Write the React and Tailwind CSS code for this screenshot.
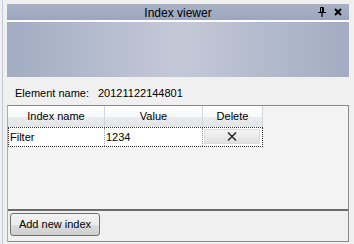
const HeaderCell = ({ children, className }) => (
  <div
    className={`flex items-center justify-center h-[21px] border-r border-[#d5d5d5] bg-[linear-gradient(to_bottom,#ffffff_0%,#f7f8fa_50%,#eaebed_51%,#e3e4e6_100%)] ${className}`}
  >
    {children}
  </div>
);

const App = () => {
  return (
    <div
      className="relative w-[354px] h-[244px] bg-[#f0f0f0] text-black overflow-hidden"
      style={{ fontFamily: '"Liberation Sans", Arial, sans-serif' }}
    >
      <div className="absolute left-[2px] top-0 w-[1px] h-full bg-[#c3c9d6]" />
      <div className="flex flex-col pl-[7px] pr-[5px] pt-[4px]">
        {/* title bar */}
        <div className="relative flex items-center justify-center h-[16px] bg-[linear-gradient(to_bottom,#a9b2c6,#9ba5bc)] text-[12px] leading-none">
          <span className="mt-[1px]">Index viewer</span>
          <div className="absolute right-[7px] top-[3px] flex items-center gap-[8px]">
            <svg width="8" height="10" viewBox="0 0 8 10">
              <path d="M2.5 0.5h3v5h-3z" stroke="#000" strokeWidth="1" fill="none" />
              <path d="M4.5 1v4.5 M0 5.5h8 M4 6v4" stroke="#000" strokeWidth="1.2" />
            </svg>
            <svg width="8" height="8" viewBox="0 0 8 8">
              <path d="M1 1L7 7M7 1L1 7" stroke="#000" strokeWidth="2" />
            </svg>
          </div>
        </div>
        <div className="h-[2px] bg-white" />
        {/* banner */}
        <div className="h-[55px] bg-[linear-gradient(to_right,#a2acc2_0%,#c4c9d8_50%,#a2acc2_100%)]" />

        {/* element name */}
        <div className="flex items-center h-[28px] pt-[4px] pl-[8px] text-[11px]">
          <span className="w-[83px]">Element name:</span>
          <span>20121122144801</span>
        </div>

        {/* grid panel */}
        <div className="flex flex-col h-[137px] border border-[#8a8a8a] border-l-[#adadad]">
          <div className="flex flex-col h-[105px] bg-[#f3f3f3] border-b-2 border-[#6a6a6a] text-[11px]">
            <div className="flex">
              <HeaderCell className="w-[97px]">Index name</HeaderCell>
              <HeaderCell className="w-[98px]">Value</HeaderCell>
              <HeaderCell className="w-[60px]">Delete</HeaderCell>
            </div>
            <div className="flex w-[255px] h-[20px] bg-white border border-dotted border-[#333]">
              <div className="w-[96px] flex items-center pl-[1px] border-r border-dotted border-[#999]">
                Filter
              </div>
              <div className="w-[98px] flex items-center pl-[1px] border-r border-dotted border-[#999]">
                1234
              </div>
              <div className="flex-1 flex items-start">
                <div className="flex items-center justify-center w-[56px] h-[15px] mt-[1px] ml-[1px] bg-[linear-gradient(to_bottom,#f4f4f4,#e0e0e0)] border border-[#dcdcdc]">
                  <svg width="10" height="9" viewBox="0 0 10 9">
                    <path d="M1 0.5L9 8.5M9 0.5L1 8.5" stroke="#222" strokeWidth="1.4" />
                  </svg>
                </div>
              </div>
            </div>
          </div>
          <div className="flex items-start pl-[2px] pt-[2px]">
            <button className="w-[90px] h-[23px] rounded-[3px] border border-[#707070] bg-[linear-gradient(to_bottom,#f2f2f2_0%,#ebebeb_50%,#dddddd_51%,#cfcfcf_100%)] text-[11px] leading-none">
              Add new index
            </button>
          </div>
        </div>
      </div>
    </div>
  );
};

export default App;
